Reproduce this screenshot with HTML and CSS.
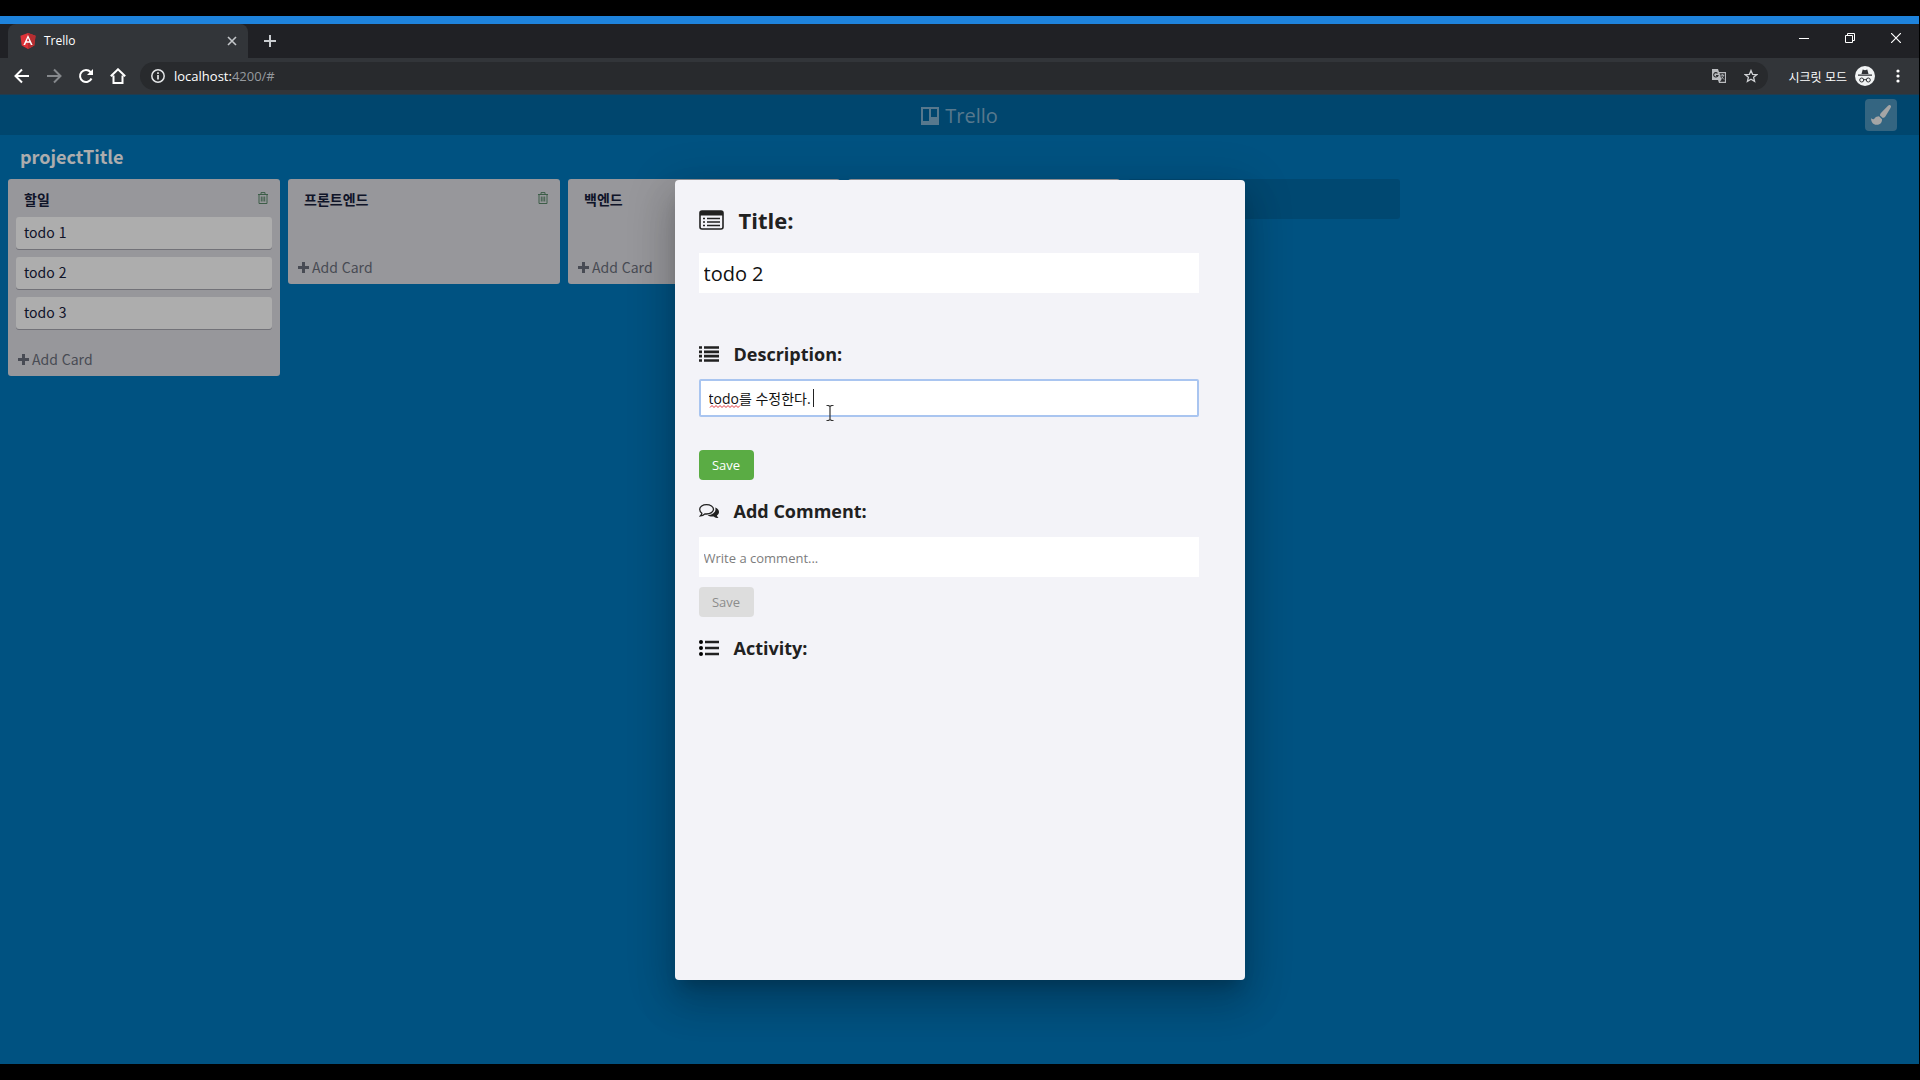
FILE: index.html
```html
<!DOCTYPE html>
<html lang="ko">
<head>
<meta charset="utf-8">
<title>Trello</title>
<link rel="stylesheet" href="styles.css">
</head>
<body>
<div class="window">
  <div class="tabstrip">
    <div class="tab">
      <svg class="tab-logo" viewBox="0 0 16 16"><path fill="#dd3338" d="M8 0 15.500 2.700 14.300 12.500 8 16 1.700 12.500.5 2.700z"/><path fill="#b52e31" d="M8 0 15.500 2.700 14.300 12.500 8 16z"/><path fill="#fff" fill-rule="evenodd" d="M8 2 3.400 12h1.700l1-2.300h3.800l1 2.300h1.700zM8 5l1.300 3.300H6.700z"/></svg>
      <span class="tab-name">Trello</span>
      <button class="plain" aria-label="Close tab"><svg class="i10" viewBox="0 0 10 10"><path d="m1 1 8 8M9 1 1 9" fill="none" stroke="#c4c7ca" stroke-width="1.600"/></svg></button>
    </div>
    <button class="plain new-tab" aria-label="New tab"><svg class="i12" viewBox="0 0 12 12"><path d="M6 0v12M0 6h12" stroke="#c9ccd0" stroke-width="2"/></svg></button>
    <div class="window-controls">
      <button class="plain" aria-label="Minimize"><svg class="i10" viewBox="0 0 10 10"><path d="M0 5.500h10" stroke="#fff"/></svg></button>
      <button class="plain" aria-label="Restore"><svg class="i10" viewBox="0 0 10 10"><path d="M.5 2.500h7v7h-7zM2.500 2.500v-2h7v7h-2" fill="none" stroke="#fff"/></svg></button>
      <button class="plain" aria-label="Close"><svg class="i10" viewBox="0 0 10 10"><path d="m0 0 10 10M10 0 0 10" stroke="#fff" stroke-width="1.200"/></svg></button>
    </div>
  </div>
  <div class="toolbar">
    <button class="plain" aria-label="Back"><svg class="i16" viewBox="0 0 16 16"><path d="M15 8H2M8 1.500 1.500 8 8 14.500" fill="none" stroke="#fff" stroke-width="2"/></svg></button>
    <button class="plain" aria-label="Forward"><svg class="i16" viewBox="0 0 16 16"><path d="M1 8h13M8 1.500 14.500 8 8 14.500" fill="none" stroke="#85888c" stroke-width="2"/></svg></button>
    <button class="plain" aria-label="Reload"><svg class="i16" viewBox="0 0 16 16"><path d="M13.500 10.500A6 6 0 1 1 12.500 4L14 5.500" fill="none" stroke="#fff" stroke-width="2"/><path d="M15 1v6H9z" fill="#fff"/></svg></button>
    <button class="plain" aria-label="Home"><svg class="i16" viewBox="0 0 16 16"><path d="M3.500 7.500V15h9V7.500M.8 8.300 8 1.300l7.200 7" fill="none" stroke="#fff" stroke-width="2"/></svg></button>
    <div class="address">
      <svg class="i14" viewBox="0 0 14 14"><circle cx="7" cy="7" r="6.200" fill="none" stroke="#e3e5e7" stroke-width="1.500"/><path d="M7 6v4.500M7 3.300v1.700" stroke="#e3e5e7" stroke-width="1.700"/></svg>
      <span class="url">localhost:<span class="url-rest">4200/#</span></span>
      <button class="plain" aria-label="Translate"><svg class="i14" viewBox="0 0 14 14"><path fill="#b9bbbe" d="M0 0h6l1 3h7v11H7l-1-3H0z"/><path d="M5.500 4.300A2.200 2.200 0 1 0 6 6.500H4" fill="none" stroke="#282a2d" stroke-width="1.100"/><path d="M7.500 4.200h5.400v8.600H7.800l1.700-2z" fill="#282a2d"/><path d="M8.300 6.200h4M10.300 5v1.200M11.500 6.200c-.3 1.800-1.500 3-3 4M9.300 7.500l2.700 3" fill="none" stroke="#b9bbbe" stroke-width=".9"/></svg></button>
      <button class="plain" aria-label="Bookmark"><svg class="i14" viewBox="0 0 14 14"><path d="m7 1.500 1.600 3.800 4.200.3-3.200 2.700 1 4.100L7 10.200l-3.600 2.200 1-4.100L1.200 5.600l4.200-.3z" fill="none" stroke="#cfd1d4" stroke-width="1.300"/></svg></button>
    </div>
    <span class="incognito-name">시크릿 모드</span>
    <svg class="i20" viewBox="0 0 20 20"><circle cx="10" cy="10" r="10" fill="#f1f3f4"/><path fill="#303236" d="M6.500 8 7.700 3.600 10 4.200l2.300-.6L13.500 8zM3 8.500h14v1.200H3z"/><path d="M8.700 14a2 2 0 1 1-4 0 2 2 0 0 1 4 0q1.300-1 2.600 0a2 2 0 1 1 4 0 2 2 0 0 1-4 0" fill="none" stroke="#303236"/></svg>
    <button class="plain" aria-label="Menu"><svg class="i14" viewBox="0 0 14 14"><circle cx="7" cy="2" r="1.600" fill="#fff"/><circle cx="7" cy="7" r="1.600" fill="#fff"/><circle cx="7" cy="12" r="1.600" fill="#fff"/></svg></button>
  </div>

  <div class="page">
    <header class="app-header">
      <a class="brand" href="#"><svg class="brand-icon" viewBox="0 0 18 18"><path fill="currentColor" fill-rule="evenodd" d="M0 0h18v18H0zM2 2v12h6V2zM10 2v8h6V2z"/></svg>Trello</a>
      <button class="paint" aria-label="Change background"><svg class="i20" viewBox="0 0 20 20"><path fill="currentColor" d="M19.500.4c.8.700.6 1.700 0 2.700l-5 8.200c-.7 1-1.600 1.500-2.700 1.800L9 10.400c0-1.200.5-2.200 1.400-3L17 .8c.8-.7 1.700-1 2.500-.4zM8 11.300l3 2.900c.3 3.300-2 5.600-5.300 5.600C2 19.800.2 17 0 13.200c1 .7 1.700 1.200 2.600 1 1.500-.5 1.500-2.800 5.400-2.900z"/></svg></button>
    </header>
    <main class="board">
      <h1 class="board-title">projectTitle</h1>
      <div class="lists">
        <section class="list">
          <div class="list-head"><h2 class="list-name">할일</h2><button class="plain" aria-label="Delete list"><svg class="trash" viewBox="0 0 12 12"><path d="M1 2.500h10M4 2.300V.6h4v1.700M2 2.500v9h8v-9M4.300 4.500v5M6 4.500v5M7.700 4.500v5" fill="none" stroke="currentColor"/></svg></button></div>
          <div class="cards"><div class="card">todo 1</div><div class="card">todo 2</div><div class="card">todo 3</div></div>
          <button class="add-card"><svg class="plus" viewBox="0 0 11 11"><path d="M5.500 0v11M0 5.500h11" stroke="currentColor" stroke-width="3"/></svg>Add Card</button>
        </section>
        <section class="list">
          <div class="list-head"><h2 class="list-name">프론트엔드</h2><button class="plain" aria-label="Delete list"><svg class="trash" viewBox="0 0 12 12"><path d="M1 2.500h10M4 2.300V.6h4v1.700M2 2.500v9h8v-9M4.300 4.500v5M6 4.500v5M7.700 4.500v5" fill="none" stroke="currentColor"/></svg></button></div>
          <div class="cards"></div>
          <button class="add-card"><svg class="plus" viewBox="0 0 11 11"><path d="M5.500 0v11M0 5.500h11" stroke="currentColor" stroke-width="3"/></svg>Add Card</button>
        </section>
        <section class="list">
          <div class="list-head"><h2 class="list-name">백엔드</h2></div>
          <div class="cards"></div>
          <button class="add-card"><svg class="plus" viewBox="0 0 11 11"><path d="M5.500 0v11M0 5.500h11" stroke="currentColor" stroke-width="3"/></svg>Add Card</button>
        </section>
        <section class="list"><div class="list-head"></div><div class="cards"></div></section>
        <div class="add-list"></div>
      </div>
    </main>

    <div class="backdrop">
      <div class="dialog" role="dialog" aria-label="Card">
        <label class="heading heading-title" for="card-title"><svg class="icon-title" viewBox="0 0 25 20"><rect x="1" y="1" width="23" height="18" rx="2" fill="none" stroke="currentColor" stroke-width="1.600"/><path fill="currentColor" d="M1 1h23v4.500H1z"/><path d="M4 8.500h2m2 0h13M4 12h2m2 0h13M4 15.500h2m2 0h13" stroke="currentColor" stroke-width="1.300"/></svg>Title:</label>
        <input class="field field-title" id="card-title" value="todo 2">
        <label class="heading heading-desc" for="card-desc"><svg class="icon" viewBox="0 0 20 16"><path d="M0 1.500h3m2 0h15M0 5.800h3m2 0h15M0 10.200h3m2 0h15M0 14.500h3m2 0h15" stroke="currentColor" stroke-width="2.700"/></svg>Description:</label>
        <div class="desc">
          <input class="field field-desc" id="card-desc" value="todo를 수정한다." spellcheck="false">
          <svg class="squiggle" viewBox="0 0 30 3"><path d="m0 2.500 2-2 2 2 2-2 2 2 2-2 2 2 2-2 2 2 2-2 2 2 2-2 2 2 2-2 2 2 2-2" fill="none" stroke="#e0343a"/></svg>
          <span class="caret"></span>
          <svg class="pointer" viewBox="0 0 8 16"><path d="M.5.500h2L4 1.500 5.500.500h2M4 1.500v13M.5 15.500h2L4 14.500l1.500 1h2" fill="none" stroke="#333" stroke-width="1.200"/></svg>
        </div>
        <button class="save">Save</button>
        <label class="heading" for="card-comment"><svg class="icon" viewBox="0 0 20 16"><path d="M7.500 1.700c3.900 0 7 2 7 4.600s-3.100 4.700-7 4.700l-1.700-.1C4.500 12 3.200 12.600 1.500 12.800c.8-.8 1.200-1.500 1.400-2.600C1.400 9.200.7 7.900.7 6.300c0-2.600 3-4.600 6.800-4.600z" fill="none" stroke="currentColor" stroke-width="1.300"/><path d="M16.200 4.500C18.500 5.300 20 7 20 9c0 1.400-.8 2.700-2.100 3.600.2 1 .7 1.700 1.600 2.500-2 0-3.500-.6-4.800-1.700-2.200.4-4.600 0-6.200-1.200 4.700-.2 9.300-3.200 7.700-7.700z" fill="currentColor"/></svg>Add Comment:</label>
        <input class="field" id="card-comment" placeholder="Write a comment...">
        <button class="save save-comment" disabled>Save</button>
        <h3 class="heading"><svg class="icon" viewBox="0 0 20 16"><circle cx="2" cy="2" r="2"/><circle cx="2" cy="8" r="2"/><circle cx="2" cy="14" r="2"/><path d="M6 2h14M6 8h14M6 14h14" stroke="currentColor" stroke-width="2.500"/></svg>Activity:</h3>
      </div>
    </div>
  </div>
</div>
</body>
</html>
```
FILE: styles.css
```css
* { box-sizing: border-box; }
body {
  margin: 0;
  background: #000;
  font-family: "Noto Sans CJK KR", sans-serif;
  font-size: 14px;
}
h1, h2, h3 { margin: 0; }
svg { display: block; flex: none; }
button, input { font: inherit; }

.window {
  display: flex;
  flex-direction: column;
  min-height: 100vh;
  border: solid #000;
  border-width: 16px 1px 16px 0;
}
.plain {
  display: flex;
  padding: 0;
  border: 0;
  background: none;
  color: inherit;
}
.i10 { width: 10px; height: 10px; }
.i12 { width: 12px; height: 12px; }
.i14 { width: 14px; height: 14px; }
.i16 { width: 16px; height: 16px; }
.i20 { width: 20px; height: 20px; }

/* Browser frame */
.tabstrip {
  display: flex;
  align-items: center;
  height: 42px;
  padding: 0 18px 0 8px;
  border-top: 8px solid #1e83dc;
  background: #202125;
}
.tab {
  display: flex;
  align-items: center;
  gap: 8px;
  width: 240px;
  height: 34px;
  padding: 0 11px 0 12px;
  border-radius: 8px 8px 0 0;
  background: #323539;
  color: #fff;
  font: 12px/16px "Open Sans", sans-serif;
}
.tab-logo { width: 16px; height: 16px; }
.tab-name { flex: 1; }
.new-tab { margin-left: 16px; }
.window-controls {
  display: flex;
  gap: 36px;
  margin-left: auto;
  padding-bottom: 6px;
}
.toolbar {
  display: flex;
  align-items: center;
  gap: 16px;
  height: 37px;
  padding: 0 14px;
  border-bottom: 1px solid #1f3c50;
  background: #323539;
}
.toolbar > .i20 { margin-left: -8px; }
.address {
  display: flex;
  flex: 1;
  align-items: center;
  gap: 18px;
  height: 28px;
  margin: 0 4px 0 -2px;
  padding: 0 10px 0 11px;
  border-radius: 14px;
  background: #282a2d;
}
.url {
  flex: 1;
  margin-left: -9px;
  color: #fff;
  font: 13px/20px "Open Sans", sans-serif;
}
.url-rest { color: #969a9f; }
.incognito-name { color: #fff; font-size: 12px; }

/* Board */
.page {
  position: relative;
  display: flex;
  flex: 1;
  flex-direction: column;
  background: #0079bf;
}
.app-header {
  display: grid;
  grid-template-columns: 1fr auto 1fr;
  align-items: center;
  height: 40px;
  padding: 0 22px;
  background: rgba(0, 0, 0, .15);
}
.brand {
  display: flex;
  grid-column: 2;
  align-items: center;
  gap: 6px;
  padding-top: 2px;
  color: #80b2d0;
  font: 20px/24px "Open Sans", sans-serif;
  text-decoration: none;
}
.brand-icon { width: 18px; height: 18px; }
.paint {
  display: grid;
  place-items: center;
  justify-self: end;
  width: 32px;
  height: 32px;
  padding: 0;
  border: 0;
  border-radius: 4px;
  background: rgba(255, 255, 255, .3);
  color: #f4f4f4;
}
.board { padding: 0 8px; }
.board-title {
  padding: 0 12px 2px;
  color: #fff;
  font-size: 18px;
  line-height: 42px;
}
.lists {
  display: flex;
  align-items: flex-start;
  gap: 8px;
}
.list {
  flex: none;
  width: 272px;
  border-radius: 3px;
  background: #dfdfe5;
  color: #17203c;
}
.list-head {
  display: flex;
  align-items: center;
  justify-content: space-between;
  height: 38px;
  padding: 0 11px 0 16px;
}
.list-name { padding-top: 2px; font-size: 14px; line-height: 20px; }
.trash {
  width: 12px;
  height: 12px;
  color: #5a8a6b;
}
.cards {
  display: flex;
  flex-direction: column;
  gap: 8px;
  min-height: 28px;
  padding: 0 8px;
}
.card {
  height: 32px;
  padding: 0 8px;
  border-radius: 3px;
  background: #fff;
  box-shadow: 0 1px 0 #a8a8b2;
  line-height: 30px;
}
.card:last-child { margin-bottom: 8px; }
.add-card {
  display: flex;
  align-items: center;
  gap: 3px;
  width: 100%;
  padding: 13px 10px 8px;
  border: 0;
  background: none;
  color: #6b6f7c;
  line-height: 18px;
}
.plus { width: 11px; height: 11px; }
.add-list {
  width: 272px;
  height: 40px;
  border-radius: 3px;
  background: rgba(0, 0, 0, .12);
}

/* Card dialog */
.backdrop {
  position: absolute;
  inset: 0;
  display: grid;
  place-items: center;
  background: rgba(0, 0, 0, .32);
}
.dialog {
  width: 570px;
  min-height: 800px;
  padding: 24px;
  border-radius: 4px;
  background: #f3f3f8;
  box-shadow: 0 11px 15px -7px rgba(0, 0, 0, .2), 0 24px 38px 3px rgba(0, 0, 0, .14), 0 9px 46px 8px rgba(0, 0, 0, .12);
  color: #212121;
  font-family: "Open Sans", "Noto Sans CJK KR", sans-serif;
  font-size: 13px;
}
.heading {
  display: flex;
  align-items: center;
  gap: 15px;
  margin: 17px 0 12px;
  font-size: 18px;
  font-weight: 700;
  line-height: 28px;
}
.icon { width: 20px; height: 16px; }
.heading-title {
  margin: 0 0 17px;
  font-size: 22px;
  line-height: 32px;
}
.icon-title { width: 25px; height: 20px; }
.heading-desc { margin: 47px 0 11px; }
.field {
  display: block;
  width: 500px;
  max-width: 100%;
  height: 40px;
  padding: 2px 5px 0;
  border: 0;
  background: #fff;
  color: #111;
}
.field-title { font-size: 20px; }
.field::placeholder { color: #7d7d7d; }
.desc {
  position: relative;
  margin-bottom: 33px;
}
.field-desc {
  height: 38px;
  padding: 1px 8px 0;
  border: 2px solid #a9c5f0;
  border-radius: 2px;
  font-size: 14px;
}
.squiggle {
  position: absolute;
  top: 26px;
  left: 10px;
  width: 32px;
  height: 3px;
}
.caret {
  position: absolute;
  top: 10px;
  left: 114px;
  width: 1px;
  height: 18px;
  background: #222;
}
.pointer {
  position: absolute;
  top: 26px;
  left: 127px;
  width: 8px;
  height: 16px;
}
.save {
  display: block;
  width: 55px;
  height: 30px;
  padding: 0;
  border: 0;
  border-radius: 4px;
  background: #5aac44;
  color: #fff;
}
.save-comment { margin-top: 10px; }
.save:disabled {
  background: #dddddd;
  color: #8c8c8c;
}
```
